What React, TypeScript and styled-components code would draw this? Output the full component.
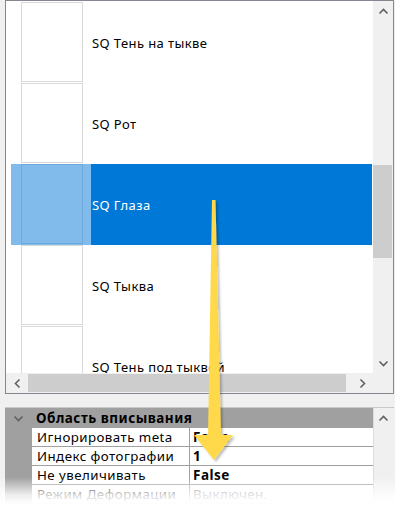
import { createGlobalStyle, styled } from 'styled-components'

const items = [
  'SQ Тень на тыкве',
  'SQ Рот',
  'SQ Глаза',
  'SQ Тыква',
  'SQ Тень под тыквой',
]

const props = [
  { name: 'Игнорировать meta', value: 'False', bold: true },
  { name: 'Индекс фотографии', value: '1', bold: true },
  { name: 'Не увеличивать', value: 'False', bold: true },
  { name: 'Режим Деформации', value: 'Выключен.', bold: false },
]

export default function App() {
  return (
    <Page>
      <GlobalStyle />
      <ListBox>
        <ListViewport>
          {items.map((label, index) => (
            <ListRow key={label}>
              <ThumbCell $selected={index === 2}>
                <Thumb $selected={index === 2} />
              </ThumbCell>
              <RowLabel $selected={index === 2}>{label}</RowLabel>
            </ListRow>
          ))}
        </ListViewport>
        <VScroll>
          <ArrowButton>
            <Chevron dir="up" />
          </ArrowButton>
          <VTrack>
            <VThumb />
          </VTrack>
          <ArrowButton>
            <Chevron dir="down" />
          </ArrowButton>
        </VScroll>
        <HScroll>
          <HArrowButton>
            <Chevron dir="left" />
          </HArrowButton>
          <HThumb />
          <HArrowButton>
            <Chevron dir="right" />
          </HArrowButton>
        </HScroll>
        <Corner />
      </ListBox>

      <PropertyGrid>
        <GridBody>
          <CategoryRow>
            <CategoryToggle>
              <Chevron dir="down" />
            </CategoryToggle>
            <CategoryTitle>Область вписывания</CategoryTitle>
          </CategoryRow>
          {props.map((p) => (
            <PropRow key={p.name}>
              <PropName>{p.name}</PropName>
              <PropValue $bold={p.bold}>{p.value}</PropValue>
            </PropRow>
          ))}
        </GridBody>
        <GridScroll>
          <ArrowButton>
            <Chevron dir="up" />
          </ArrowButton>
        </GridScroll>
      </PropertyGrid>

      <FadeOut />

      <Pointer width="395" height="527" viewBox="0 0 395 527">
        <defs>
          <filter id="arrow-shadow" x="-50%" y="-10%" width="200%" height="130%">
            <feDropShadow dx="2" dy="2" stdDeviation="1.2" floodColor="#000" floodOpacity="0.25" />
          </filter>
        </defs>
        <g filter="url(#arrow-shadow)" fill="#ffd94a">
          <polygon points="212,200 215.5,200 221,437 208,437" />
          <polygon points="194,435 233,435 214,460" />
        </g>
      </Pointer>
    </Page>
  )
}

function Chevron({ dir }: { dir: 'up' | 'down' | 'left' | 'right' }) {
  const rotate = { up: 0, right: 90, down: 180, left: 270 }[dir]
  return (
    <svg width="11" height="11" viewBox="0 0 11 11" style={{ transform: `rotate(${rotate}deg)` }}>
      <polyline points="1.5,7.5 5.5,3.5 9.5,7.5" fill="none" stroke="#606060" strokeWidth="1.6" />
    </svg>
  )
}

const GlobalStyle = createGlobalStyle`
  html, body {
    margin: 0;
    padding: 0;
    background: #ffffff;
  }
  body {
    font-family: 'Noto Sans', 'Open Sans', sans-serif;
  }
`

const Page = styled.div`
  position: relative;
  width: 395px;
  height: 527px;
  overflow: hidden;
  background: #f0f0f0;
  padding-left: 5px;
  box-sizing: border-box;
`

const ListBox = styled.div`
  display: grid;
  grid-template-columns: 367px 20px;
  grid-template-rows: 372px 20px;
  width: 389px;
  height: 394px;
  box-sizing: border-box;
  background: #ffffff;
  border: 1px solid #828790;
`

const ListViewport = styled.div`
  overflow: hidden;
  padding: 1px 0 0 5px;
`

const ListRow = styled.div`
  display: grid;
  grid-template-columns: 80px 1fr;
  height: 81px;
  margin-right: 1px;
`

const ThumbCell = styled.div<{ $selected: boolean }>`
  padding-left: 10px;
  background: ${({ $selected }) => ($selected ? '#80bbeb' : 'transparent')};
`

const Thumb = styled.div<{ $selected: boolean }>`
  width: 62px;
  height: 80px;
  box-sizing: border-box;
  border: 1px solid ${({ $selected }) => ($selected ? '#6ea8da' : '#d9d9d9')};
  background: ${({ $selected }) => ($selected ? 'transparent' : '#ffffff')};
`

const RowLabel = styled.div<{ $selected: boolean }>`
  display: flex;
  align-items: center;
  padding-left: 1px;
  color: ${({ $selected }) => ($selected ? '#ffffff' : '#000000')};
  background: ${({ $selected }) => ($selected ? '#0078d7' : 'transparent')};
  font-size: 13px;
  letter-spacing: 0.4px;
  white-space: nowrap;
`

const VScroll = styled.div`
  display: flex;
  flex-direction: column;
  background: #f0f0f0;
`

const ArrowButton = styled.div`
  display: grid;
  place-items: center;
  height: 20px;
  flex: none;
`

const VTrack = styled.div`
  flex: 1;
  padding-top: 144px;
`

const VThumb = styled.div`
  width: 19px;
  height: 93px;
  background: #cdcdcd;
`

const HScroll = styled.div`
  display: flex;
  align-items: stretch;
  background: #f0f0f0;
`

const HArrowButton = styled.div`
  display: grid;
  place-items: center;
  width: 22px;
  flex: none;
`

const HThumb = styled.div`
  flex: 1;
  margin: 1px 5px 1px 0;
  background: #cdcdcd;
`

const Corner = styled.div`
  background: #f0f0f0;
`

const PropertyGrid = styled.div`
  display: grid;
  grid-template-columns: 368px 20px;
  width: 389px;
  margin-top: 13px;
  border-top: 1px solid #c8c8c8;
`

const GridBody = styled.div`
  background: #a0a0a0;
  font-size: 13.3px;
  color: #000000;
`

const CategoryRow = styled.div`
  display: flex;
  align-items: center;
  height: 20px;
`

const CategoryToggle = styled.div`
  display: grid;
  place-items: center;
  width: 27px;
`

const CategoryTitle = styled.div`
  padding-left: 4px;
  font-weight: 700;
  font-size: 13.5px;
  letter-spacing: 0.5px;
`

const PropRow = styled.div`
  display: grid;
  grid-template-columns: 158px 1fr;
  height: 19px;
  margin-left: 27px;
`

const PropName = styled.div`
  display: flex;
  align-items: center;
  padding-left: 5px;
  background: #ffffff;
  border-bottom: 1px solid #a0a0a0;
  border-right: 1px solid #a0a0a0;
  letter-spacing: 0.45px;
  white-space: nowrap;
  overflow: hidden;
`

const PropValue = styled.div<{ $bold: boolean }>`
  display: flex;
  align-items: center;
  padding-left: 3px;
  background: #ffffff;
  border-bottom: 1px solid #a0a0a0;
  font-size: ${({ $bold }) => ($bold ? '13.5px' : '13.3px')};
  font-weight: ${({ $bold }) => ($bold ? 700 : 400)};
  letter-spacing: ${({ $bold }) => ($bold ? '0.5px' : '0.4px')};
  color: ${({ $bold }) => ($bold ? '#000000' : '#6d6d6d')};
  white-space: nowrap;
`

const GridScroll = styled.div`
  background: #f0f0f0;
  border-left: 1px solid #dcdcdc;
`

const FadeOut = styled.div`
  position: absolute;
  left: 0;
  right: 0;
  bottom: 0;
  height: 50px;
  background: linear-gradient(
    to bottom,
    rgba(255, 255, 255, 0) 0%,
    rgba(255, 255, 255, 0.8) 35%,
    rgba(255, 255, 255, 0.97) 50%,
    #ffffff 60%
  );
  pointer-events: none;
`

const Pointer = styled.svg`
  position: absolute;
  left: 0;
  top: 0;
  pointer-events: none;
`
